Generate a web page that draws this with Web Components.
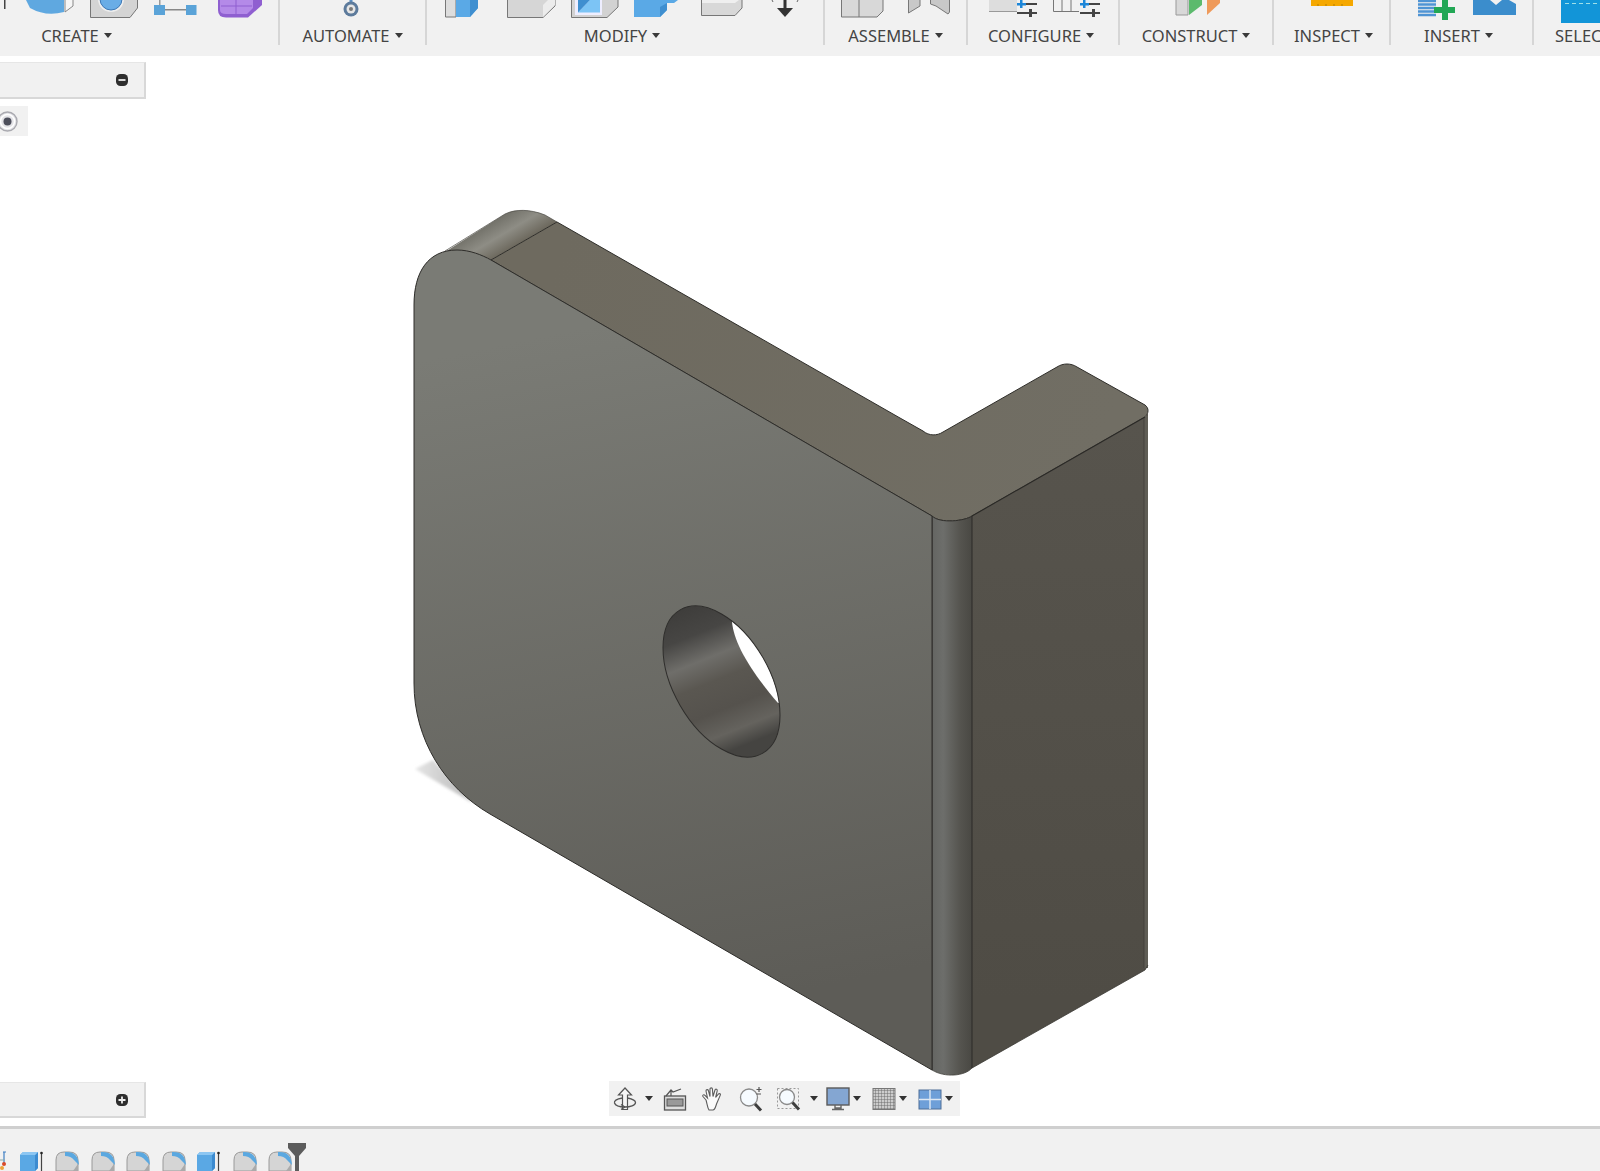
<!DOCTYPE html>
<html lang="en"><head><meta charset="utf-8"><title>Fusion workspace</title>
<style>html,body{margin:0;padding:0;background:#fff;overflow:hidden}body{width:1600px;height:1171px;font-family:"Noto Sans","Open Sans",sans-serif}
fusion-app{--c:#444}</style></head>
<body>
<fusion-app>
  <ribbon-bar slot="ribbon">
    <ribbon-group label="CREATE" style="--w:280px;--pr:125px">
      <svg viewBox="0 0 279 26" width="279" height="26">
        <rect x="4" y="0" width="1.5" height="9" fill="#444"/>
        <path d="M26 0 L30 8 Q46 17 64 12 V0Z" fill="#5fa8e0"/><path d="M65 0 V12 L73 6 V0" fill="#f6f6f6" stroke="#888"/>
        <path d="M90.5 0 V17.5 H130 L137.5 8 V0" fill="#d4d4d4" stroke="#777"/><circle cx="111" cy="-1" r="13" fill="#eee"/><circle cx="111" cy="-1" r="11" fill="#6aade6" stroke="#3e78b5"/>
        <rect x="159" y="0" width="1.5" height="5" fill="#999"/><rect x="154" y="5" width="11" height="10" fill="#5aa3d8"/><rect x="186" y="5" width="10.500" height="10" fill="#5aa3d8"/><rect x="165" y="9" width="21" height="1.500" fill="#888"/>
        <path d="M218 0 V10 Q218 17.500 226 17.500 H248 L262 5 V0Z" fill="#8f5fd0"/><path d="M220 0 V10 Q220 14 226 14 H247 L253 8 V0Z" fill="#b48ae8"/><path d="M221 6H252M236 0V14" stroke="#8f5fd0"/>
      </svg>
    </ribbon-group>
    <ribbon-group label="AUTOMATE" style="--w:147px">
      <svg viewBox="280 0 145 26" width="145" height="26"><rect x="349.500" y="0" width="3" height="5" fill="#5b8fc4"/><circle cx="351" cy="9" r="7.500" fill="#5d7b9c"/><circle cx="351" cy="9" r="4.500" fill="#e6e6e6"/><circle cx="351" cy="9" r="2" fill="#7a7a7a"/></svg>
    </ribbon-group>
    <ribbon-group label="MODIFY" style="--w:398px;--pr:6px">
      <svg viewBox="427 0 396 26" width="396" height="26">
        <path d="M445.500 0 V17 H456 V0" fill="#ddd" stroke="#777"/><path d="M456 0 V17 H470 L478 8 V0Z" fill="#5aa9e6"/><path d="M470 0V17L478 8V0Z" fill="#3f8fd0"/>
        <path d="M507.500 0 V17.500 H543 L555 6 V0" fill="#d6d6d6" stroke="#777"/><path d="M543 17 V5 L548 0 H555 V5Z" fill="#ececec"/>
        <path d="M571.500 0 V17.500 H607 L618 7 V0" fill="#d2d2d2" stroke="#777"/><rect x="575" y="0" width="27" height="15" fill="#eef"/><path d="M578 12.500 H600 V0 H590Z" fill="#7cc4f5"/><path d="M578 12.500 L590 0 H578Z" fill="#3f8fd0"/>
        <path d="M634 0 V17 H660 L667 10 V3 H674 L678 0Z" fill="#5aa9e6"/><path d="M660 17 V7 L667 3 V10Z" fill="#3f8fd0"/>
        <path d="M701.500 0 V15.500 H735 L742 8 V0" fill="#d8d8d8" stroke="#777"/><path d="M702 0 V3 H735 L739 0Z" fill="#efefef"/>
        <rect x="783.500" y="0" width="3" height="9" fill="#333"/><path d="M777 8 H793 L785 17Z" fill="#333"/><path d="M772 0 l1 2M798 0 l-1 2" stroke="#666"/>
      </svg>
    </ribbon-group>
    <ribbon-group label="ASSEMBLE" style="--w:143px">
      <svg viewBox="825 0 141 26" width="141" height="26">
        <path d="M841.500 0 V17 H877 L883 11 V0" fill="#d8d8d8" stroke="#777"/><path d="M859 0V17" stroke="#777"/>
        <path d="M908.500 0 V13 L920 6 V0" fill="#c8c8c8" stroke="#777"/><path d="M930.500 0 V4 L936 6 L948 14 L949.500 12 V0" fill="#c8c8c8" stroke="#777"/>
      </svg>
    </ribbon-group>
    <ribbon-group label="CONFIGURE" style="--w:152px;--pr:4px">
      <svg viewBox="968 0 150 26" width="150" height="26">
        <path d="M989 0 V11.500 H1017 V0Z" fill="#ddd"/><path d="M989 11.500H1017" stroke="#999"/>
        <path d="M1017 4H1037M1017 13H1037" stroke="#444" stroke-width="2"/><rect x="1020" y="0" width="2.500" height="8" fill="#1d86d8"/><rect x="1017" y="3" width="9" height="2.500" fill="#1d86d8"/><rect x="1029" y="9" width="3" height="8" fill="#444"/>
        <path d="M1053.500 0 V11.500 H1079 M1062 0V11M1071 0V11" stroke="#777" fill="none"/>
        <path d="M1080 4H1100M1080 13H1100" stroke="#444" stroke-width="2"/><rect x="1083" y="0" width="2.500" height="8" fill="#1d86d8"/><rect x="1080" y="3" width="9" height="2.500" fill="#1d86d8"/><rect x="1092" y="9" width="3" height="8" fill="#444"/>
      </svg>
    </ribbon-group>
    <ribbon-group label="CONSTRUCT" style="--w:154px">
      <svg viewBox="1120 0 152 26" width="152" height="26">
        <path d="M1176 0 V15 H1188 V0" fill="#d8d8d8" stroke="#999"/><path d="M1189 0 V15 L1202 5 V0Z" fill="#5cba6d"/><path d="M1207 0 V15 L1220 3 V0Z" fill="#ef9a5a"/>
      </svg>
    </ribbon-group>
    <ribbon-group label="INSPECT" style="--w:117px;--pl:4px">
      <svg viewBox="1274 0 115 26" width="115" height="26"><rect x="1311" y="0" width="42" height="6" fill="#f5a800"/><path d="M1318 4V6M1326 4V6M1334 4V6M1342 4V6" stroke="#b57c00"/></svg>
    </ribbon-group>
    <ribbon-group label="INSERT" style="--w:143px;--pr:6px">
      <svg viewBox="1391 0 141 26" width="141" height="26">
        <path d="M1418 1H1436M1418 4.500H1436M1418 8H1436M1418 11.500H1436M1418 15H1436" stroke="#4f94d4" stroke-width="2.500"/>
        <path d="M1442 0 H1448 V7 H1455 V13 H1448 V20 H1442 V13 H1434 V7 H1442Z" fill="#22a755"/>
        <path d="M1473 0 H1516 V15 H1473Z" fill="#3b8dcc"/><path d="M1490 0 L1496 5 L1502 0Z M1509 0 L1516 4 V0Z" fill="#f1f1f1"/>
      </svg>
    </ribbon-group>
    <ribbon-group label="SELECT" style="--w:120px;--pl:-1px;--align:flex-start;--lp:21px;--noborder:0">
      <svg viewBox="1534 0 120 26" width="120" height="26"><rect x="1561" y="0" width="60" height="23" fill="#1295d8"/><path d="M1565 3.500H1600" stroke="#9fe0e8" stroke-dasharray="4 3"/></svg>
    </ribbon-group>
  </ribbon-bar>

  <model-viewport>
    <svg slot="model" viewBox="0 56 1600 1070" width="1600" height="1070" xmlns="http://www.w3.org/2000/svg">
      <defs>
        <linearGradient id="front" gradientUnits="userSpaceOnUse" x1="620" y1="320" x2="760" y2="1000"><stop offset="0" stop-color="#7a7b75"/><stop offset="1" stop-color="#5d5c57"/></linearGradient>
        <linearGradient id="top" gradientUnits="userSpaceOnUse" x1="560" y1="250" x2="1100" y2="450"><stop offset="0" stop-color="#6e6a5f"/><stop offset="1" stop-color="#716e64"/></linearGradient>
        <linearGradient id="arc" gradientUnits="userSpaceOnUse" x1="469" y1="236" x2="485" y2="263"><stop offset="0" stop-color="#73726a"/><stop offset=".5" stop-color="#8e8d85"/><stop offset="1" stop-color="#6e6a5f"/></linearGradient>
        <linearGradient id="cyl" gradientUnits="userSpaceOnUse" x1="932" y1="0" x2="972" y2="0"><stop offset="0" stop-color="#646562"/><stop offset=".28" stop-color="#6d6e6b"/><stop offset=".7" stop-color="#55544f"/><stop offset="1" stop-color="#494843"/></linearGradient>
        <linearGradient id="right" gradientUnits="userSpaceOnUse" x1="1060" y1="420" x2="1060" y2="1000"><stop offset="0" stop-color="#57544d"/><stop offset="1" stop-color="#4f4c45"/></linearGradient>
        <linearGradient id="shadow" gradientUnits="userSpaceOnUse" x1="415" y1="768" x2="470" y2="770"><stop offset="0" stop-color="#e6e6e6"/><stop offset=".5" stop-color="#cfcfcf"/><stop offset="1" stop-color="#bdbdbd"/></linearGradient>
        <linearGradient id="bore" gradientUnits="userSpaceOnUse" x1="690" y1="608" x2="745" y2="745"><stop offset="0" stop-color="#3f3e3c"/><stop offset=".18" stop-color="#474644"/><stop offset=".36" stop-color="#6f6e6a"/><stop offset=".52" stop-color="#5a5751"/><stop offset=".72" stop-color="#55524d"/><stop offset=".88" stop-color="#65635e"/><stop offset="1" stop-color="#454441"/></linearGradient>
        <clipPath id="boreClip"><ellipse cx="721.500" cy="681.500" rx="47.800" ry="82.700" transform="rotate(-30 721.500 681.500)"/></clipPath>
        <filter id="soft" x="-20%" y="-20%" width="140%" height="140%"><feGaussianBlur stdDeviation="1.500"/></filter>
      </defs>
      <path d="M415 769 L433 760 L473 803Z" fill="url(#shadow)" filter="url(#soft)"/>
      <path d="M445 252 L505 214 C515 209 530 209 545 215 L557 222 L491 260 C478 254 462 250 445 252Z" fill="url(#arc)"/>
      <path d="M445 251 L505 214 C515 209 530 209 545 215 L557 222" fill="none" stroke="#4a4944" stroke-width=".7"/>
      <path d="M557 222 L900 418 L923 431 C929 436 937 436 943 432 L1057 367 C1063 363 1071 363 1077 367 L1145 405 C1149 408 1149 413 1145 417 L972 516 C965 521 940 524 932 516 L491 260Z" fill="url(#top)" stroke="#2e2d29" stroke-width="1"/>
      <path d="M972 516 L1145 417 L1148 412 V965 L1145 970 L972 1068Z" fill="url(#right)"/>
      <rect x="1144" y="416" width="4" height="552" fill="#5f5d55"/>
      <path d="M1144 418V968" stroke="#3f3d38" stroke-width=".8"/>
      <path d="M972 516 L1145 417" fill="none" stroke="#2a2926" stroke-width="1.100"/>
      <path d="M1148 965 L1145 970 L972 1068" fill="none" stroke="#3a3934" stroke-width=".8"/>
      <path d="M932 516 C940 524 965 521 972 516 V1068 C965 1076 945 1078 932 1070Z" fill="url(#cyl)"/>
      <path d="M932 516V1070M972 516V1068" stroke="#2c2b28" stroke-width="1"/>
      <path d="M932 516 C940 524 965 521 972 516" fill="none" stroke="#2e2d29" stroke-width=".9"/>
      <path d="M932 1070 C945 1078 965 1076 972 1068" fill="none" stroke="#3f3e39" stroke-width=".8"/>
      <path d="M491 260 L932 516 V1070 L490 814 C445 788 414 740 414 683 V305 C414 272 428 250 457 250 C470 250 482 255 491 260Z" fill="url(#front)" stroke="#2e2d2a" stroke-width="1"/>
      <g clip-path="url(#boreClip)">
        <rect x="650" y="590" width="150" height="180" fill="url(#bore)"/>
        <path d="M732 622 C734 642 748 668 778 703 L810 703 L810 590 L732 590Z" fill="#fff"/>
      </g>
      <ellipse cx="721.500" cy="681.500" rx="47.800" ry="82.700" transform="rotate(-30 721.500 681.500)" fill="none" stroke="#2e2d2b" stroke-width="1"/>
    </svg>
    <side-panel kind="minus"></side-panel>
    <radio-chip></radio-chip>
    <bottom-row>
      <side-panel kind="plus" style="--h:36px"></side-panel>
      <nav-bar>
        <nav-tool caret style="--w:50px;--g:8px"><svg viewBox="0 0 24 24" width="24" height="24"><path d="M12 1 L5.500 8 H9.500 V22.500 H14.500 V8 H18.500Z" fill="#f6f6f6" stroke="#555" stroke-width="1.200"/><path d="M9.500 11 C3 12 1 14 1.500 16 C2.500 19 8 20 12 20 C17 20 22.500 18.500 22.500 15.500 C22.500 13.500 19 12 14.500 11" fill="none" stroke="#555" stroke-width="1.300"/><path d="M12 20 L8 17.500 M12 20 L8 22.500" stroke="#555" stroke-width="1.300"/></svg></nav-tool>
        <nav-tool style="--w:37px"><svg viewBox="0 0 24 24" width="24" height="24"><rect x="1.500" y="9" width="21" height="14" fill="#ddd" stroke="#555" stroke-width="1.300"/><rect x="4" y="12" width="16" height="7" fill="#999" stroke="#555"/><path d="M3 9 L8 3 L10 5 L18 2 M8 3 V9" fill="none" stroke="#555" stroke-width="1.200"/></svg></nav-tool>
        <nav-tool style="--w:39px"><svg viewBox="0 0 24 24" width="24" height="24"><path d="M6 13 L3 9.500 C2 8 4 7 5 8.500 L7.500 11 L6 4 C5.800 2.500 8 2 8.400 3.600 L10 9.500 L10 2 C10 .5 12.400 .5 12.400 2 L13 9.500 L15 3 C15.500 1.500 17.600 2.200 17.200 3.800 L15.600 10.500 L18.500 7 C19.600 6 21 7 20.200 8.400 L16.500 17 C15.500 20 15 23 13 23 H9 C7.500 21 7 16 6 13Z" fill="#fafafa" stroke="#5c5c5c" stroke-width="1.100"/></svg></nav-tool>
        <nav-tool style="--w:38px"><svg viewBox="0 0 24 26" width="24" height="26"><circle cx="10" cy="11.500" r="8.500" fill="#f6fbff" stroke="#8a8a8a" stroke-width="1.300"/><path d="M16 18 L22 24.500" stroke="#3d3d3d" stroke-width="3"/><path d="M20 1V6M17.500 3.500H22.500M17.500 8H22" stroke="#555" stroke-width="1.200"/></svg></nav-tool>
        <nav-tool caret style="--w:49px;--g:9px"><svg viewBox="0 0 24 24" width="24" height="24"><rect x=".5" y="1.500" width="21" height="20" fill="none" stroke="#999" stroke-dasharray="2 2"/><circle cx="10" cy="10" r="7.500" fill="#f6fbff" stroke="#8a8a8a" stroke-width="1.300"/><path d="M15.500 15.500 L22 22.500" stroke="#3d3d3d" stroke-width="3"/></svg></nav-tool>
        <nav-tool caret style="--w:46px;--g:3px"><svg viewBox="0 0 24 24" width="24" height="24"><rect x="1" y="1" width="22" height="17" fill="#84a6d2" stroke="#5a5a5a" stroke-width="1.400"/><path d="M9 18 V21 H15 V18 M6 22.500H18" stroke="#666" stroke-width="1.400" fill="none"/></svg></nav-tool>
        <nav-tool caret style="--w:46px;--g:3px"><svg viewBox="0 0 24 24" width="24" height="24"><defs><pattern id="gr" width="3" height="3" patternUnits="userSpaceOnUse"><rect width="3" height="3" fill="#ccc"/><path d="M0 0H3M0 0V3" stroke="#666" stroke-width=".9"/></pattern></defs><rect x="1" y="1.500" width="22" height="21" fill="url(#gr)" stroke="#777"/></svg></nav-tool>
        <nav-tool caret style="--w:42px;--g:3px"><svg viewBox="0 0 24 24" width="24" height="24"><rect x="1" y="3" width="22" height="19" fill="#6e9fd8" stroke="#4f6f98"/><path d="M12 3V22M1 12.500H23" stroke="#dfe8f2" stroke-width="1.400"/></svg></nav-tool>
      </nav-bar>
    </bottom-row>
  </model-viewport>

  <time-line>
    <tl-step kind="sketch"></tl-step><tl-step kind="box"></tl-step><tl-step kind="fillet"></tl-step><tl-step kind="fillet"></tl-step><tl-step kind="fillet"></tl-step><tl-step kind="fillet"></tl-step><tl-step kind="box"></tl-step><tl-step kind="fillet"></tl-step><tl-step kind="fillet"></tl-step>
  </time-line>
</fusion-app>
<script>
function def(name, css, html){
  customElements.define(name, class extends HTMLElement{
    connectedCallback(){
      if(this.shadowRoot) return;
      const r=this.attachShadow({mode:'open'});
      r.innerHTML='<style>'+css+'</style>'+(typeof html==='function'?html(this):html);
    }
  });
}
def('fusion-app',':host{display:flex;flex-direction:column;width:1600px;height:1171px;overflow:hidden}','<slot name="ribbon"></slot><slot></slot>');
def('ribbon-bar',':host{display:flex;flex:none;height:56px;background:#f1f1f1;overflow:hidden;align-items:flex-start}','<slot></slot>');
def('ribbon-group',`:host{display:flex;flex:none;flex-direction:column;box-sizing:border-box;width:var(--w);height:45px;border-right:2px solid #d6d6d6}
 .i{height:25px;overflow:hidden;flex:none}.i ::slotted(svg){display:block}
 .l{display:flex;align-items:center;justify-content:var(--align,center);height:21px;flex:none;padding-left:var(--lp,var(--pl,0));padding-right:var(--pr,0);font:16.5px/21px "Noto Sans","Open Sans",sans-serif;color:#444;white-space:nowrap}
 i{display:block;width:0;height:0;margin-left:5px;border-left:4.5px solid transparent;border-right:4.5px solid transparent;border-top:5.5px solid #3a3a3a}`,
 e=>'<div class="i"><slot></slot></div><div class="l"><span>'+e.getAttribute('label')+'</span><i></i></div>');
def('model-viewport',`:host{display:flex;flex-direction:column;flex:none;height:1070px;position:relative;background:#fff;padding-top:6px;box-sizing:border-box}
 .m{position:absolute;left:0;top:0}.m ::slotted(svg){display:block}.f{display:flex;flex-direction:column;flex:1;position:relative}`,
 '<div class="m"><slot name="model"></slot></div><div class="f"><slot></slot></div>');
def('side-panel',`:host{display:flex;flex:none;box-sizing:border-box;width:146px;height:var(--h,37px);background:#f1f1f1;border-right:2px solid #d8d8d8;border-bottom:2px solid #d8d8d8;border-top:1px solid #e6e6e6;align-items:center;justify-content:flex-end;padding-right:16px}
 svg{display:block}`,
 e=>'<svg width="12" height="12" viewBox="0 0 12 12"><rect width="12" height="12" rx="4.500" fill="#2e2e2e"/><path d="'+(e.getAttribute('kind')==='plus'?'M2.500 6H9.500M6 2.500V9.500':'M2.500 6H9.500')+'" stroke="#eee" stroke-width="1.800"/></svg>');
def('radio-chip',`:host{display:flex;flex:none;width:28px;height:30px;margin-top:7px;background:#f1f1f1;align-items:center;overflow:hidden}svg{display:block;margin-left:-3px;flex:none}`,
 '<svg width="21" height="21" viewBox="0 0 21 21"><circle cx="10.500" cy="10.500" r="9.500" fill="#e4e4e8" stroke="#aaaab0" stroke-width="1.400"/><circle cx="10.500" cy="10.500" r="7" fill="none" stroke="#fff" stroke-width="1.500"/><circle cx="10.500" cy="10.500" r="4" fill="#4d4f5c"/></svg>');
def('bottom-row',`:host{display:flex;flex:none;margin-top:auto;align-items:flex-end;padding-bottom:8px}`,'<slot></slot>');
def('nav-bar',`:host{display:flex;flex:none;box-sizing:border-box;height:35px;margin-left:463px;margin-bottom:2px;padding-left:4px;width:351px;background:#f1f1f1;align-items:center}`,'<slot></slot>');
def('nav-tool',`:host{display:flex;flex:none;width:var(--w);align-items:center}::slotted(svg){display:block;flex:none}
 i{display:block;width:0;height:0;margin-left:var(--g,6px);border-left:4px solid transparent;border-right:4px solid transparent;border-top:5px solid #333}`,
 e=>'<slot></slot>'+(e.hasAttribute('caret')?'<i></i>':''));
def('time-line',`:host{display:flex;flex:none;box-sizing:border-box;height:45px;background:#f1f1f1;border-top:3px solid #cfcfcf;padding-top:22px;padding-left:0;margin-left:-16px;position:relative;width:1616px}
 .m{position:absolute;left:304px;top:14px}`,
 '<slot></slot><svg class="m" width="18" height="28" viewBox="0 0 18 28"><path d="M0 0H18V5L11 13V28H7V13L0 5Z" fill="#5c5c5c"/></svg>');
const S={
 sketch:'<path d="M19 1H22M20 1V14" stroke="#3f7fc4" stroke-width="1.200" fill="none"/><path d="M16 9H21" stroke="#8aa" /><circle cx="20" cy="13" r="2" fill="#d84a2a"/><circle cx="18" cy="17" r="2" fill="#eda33a"/>',
 box:'<path d="M0 4 L3 1 H18 V17 L15 20 H0Z" fill="#5aa8e4"/><path d="M15 20 V4 L18 1 V17Z" fill="#3c8bd0"/><path d="M0 4 L3 1H18L15 4Z" fill="#8cc6f2"/><path d="M21.500 2V20" stroke="#444" stroke-width="1.200"/><circle cx="21.500" cy="2" r="1.300" fill="#222"/>',
 fillet:'<path d="M1 20 V9 Q1 1 9 1 H14 Q23 1 23 9 V20Z" fill="#d5d5d5" stroke="#9a9a9a"/><path d="M10 1 Q23 0 24 14 L19 9 Q16 5 10 5Z" fill="#5ba8e0"/><path d="M23 13 L18 20 H23Z" fill="#aaa"/>'
};
def('tl-step',`:host{display:block;flex:none;width:35.500px}svg{display:block}`,
 e=>'<svg width="24" height="20" viewBox="0 0 24 20">'+S[e.getAttribute('kind')]+'</svg>');
</script>
</body></html>
